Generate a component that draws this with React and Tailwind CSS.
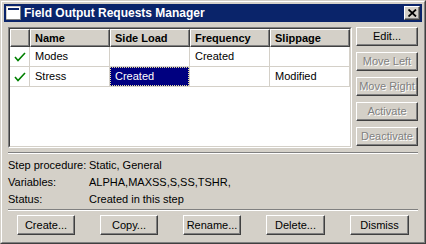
import React from 'react';

const FONT = "font-['Liberation_Sans',Arial,sans-serif]";

const Check = () => (
  <svg width="12" height="10" viewBox="0 0 12 10" className="block">
    <polyline points="1,5 4,8.5 11,1" fill="none" stroke="#008000" strokeWidth="1.6" />
  </svg>
);

const WinButton = ({ children, disabled, className = '' }) => (
  <div
    className={`flex items-center justify-center bg-[#d4d0c8] border border-t-white border-l-white border-r-[#404040] border-b-[#404040] shadow-[inset_-1px_-1px_0_#808080] text-[11px] ${
      disabled ? 'text-[#808080] [text-shadow:1px_1px_0_#fff]' : 'text-black'
    } ${className}`}
  >
    {children}
  </div>
);

const HeaderCell = ({ children, w }) => (
  <div
    className={`${w} h-[18px] flex items-center pl-[4px] font-bold bg-[#d4d0c8] border border-t-white border-l-white border-r-[#404040] border-b-[#404040] shadow-[inset_-1px_-1px_0_#808080]`}
  >
    {children}
  </div>
);

const Cell = ({ children, w, selected }) => (
  <div className={`${w} h-[20px] border-r border-b border-[#d4d0c8] flex items-stretch`}>
    {selected ? (
      <div className="flex-1 flex items-center pl-[4px] bg-[#000080] text-white border border-dotted border-[#e8e0a0]">
        {children}
      </div>
    ) : (
      <div className="flex-1 flex items-center pl-[5px]">{children}</div>
    )}
  </div>
);

const rows = [
  { name: 'Modes', side: '', freq: 'Created', slip: '' },
  { name: 'Stress', side: 'Created', freq: '', slip: 'Modified', selected: true },
];

export default function App() {
  return (
    <div className={`w-[426px] h-[244px] bg-[#d4d0c8] ${FONT} text-[11px] text-black border border-t-[#d4d0c8] border-l-[#d4d0c8] border-r-[#404040] border-b-[#404040]`}>
      <div className="h-full border border-t-white border-l-white border-r-[#808080] border-b-[#808080] p-[2px] flex flex-col">
        {/* Title bar */}
        <div className="h-[18px] bg-[#0a246a] flex items-center pl-[2px] pr-[2px]">
          <svg width="16" height="15" viewBox="0 0 16 15" className="block">
            <rect x="0" y="0" width="15" height="14" fill="#d4d0c8" />
            <rect x="1" y="1" width="13" height="12" fill="#fff" />
            <rect x="2" y="2" width="11" height="2" fill="#0a246a" />
            <rect x="0" y="13" width="15" height="1" fill="#808080" />
            <rect x="14" y="0" width="1" height="14" fill="#808080" />
          </svg>
          <span className="ml-[2px] text-white font-bold text-[12px]">Field Output Requests Manager</span>
          <div className="ml-auto w-[16px] h-[14px] bg-[#d4d0c8] border border-t-white border-l-white border-r-[#404040] border-b-[#404040] shadow-[inset_-1px_-1px_0_#808080] flex items-center justify-center">
            <svg width="9" height="8" viewBox="0 0 9 8" className="block">
              <path d="M0.5 0.5 L8 7.5 M8 0.5 L0.5 7.5" stroke="#000" strokeWidth="1.8" />
            </svg>
          </div>
        </div>

        {/* Body */}
        <div className="flex-1 flex flex-col px-[4px] pt-[5px]">
          <div className="flex gap-[4px]">
            {/* Table */}
            <div className="w-[344px] h-[121px] border border-t-[#808080] border-l-[#808080] border-r-white border-b-white">
              <div className="h-full border border-t-[#404040] border-l-[#404040] border-r-[#d4d0c8] border-b-[#d4d0c8] bg-white">
                <div className="flex">
                  <HeaderCell w="w-[20px]" />
                  <HeaderCell w="w-[80px]">Name</HeaderCell>
                  <HeaderCell w="w-[80px]">Side Load</HeaderCell>
                  <HeaderCell w="w-[80px]">Frequency</HeaderCell>
                  <HeaderCell w="w-[80px]">Slippage</HeaderCell>
                </div>
                {rows.map((r) => (
                  <div key={r.name} className="flex">
                    <div className="w-[20px] h-[20px] border-r border-b border-[#d4d0c8] flex items-center justify-center">
                      <Check />
                    </div>
                    <Cell w="w-[80px]">{r.name}</Cell>
                    <Cell w="w-[80px]" selected={r.selected}>{r.side}</Cell>
                    <Cell w="w-[80px]">{r.freq}</Cell>
                    <Cell w="w-[80px]">{r.slip}</Cell>
                  </div>
                ))}
              </div>
            </div>

            {/* Side buttons */}
            <div className="flex flex-col gap-[6px] w-[62px]">
              <WinButton className="h-[19px]">Edit...</WinButton>
              <WinButton className="h-[19px]" disabled>Move Left</WinButton>
              <WinButton className="h-[19px]" disabled>Move Right</WinButton>
              <WinButton className="h-[19px]" disabled>Activate</WinButton>
              <WinButton className="h-[19px]" disabled>Deactivate</WinButton>
            </div>
          </div>

          <div className="mt-[4px] w-[410px] h-[2px] border-t border-t-[#808080] border-b border-b-white" />

          <div className="grid grid-cols-[81px_1fr] pt-[3px] leading-[17px]">
            <span>Step procedure:</span>
            <span>Static, General</span>
            <span>Variables:</span>
            <span>ALPHA,MAXSS,S,SS,TSHR,</span>
            <span>Status:</span>
            <span>Created in this step</span>
          </div>

          <div className="mt-[1px] w-[410px] h-[2px] border-t border-t-[#808080] border-b border-b-white" />

          <div className="flex gap-[25px] pl-[9px] pt-[4px]">
            <WinButton className="w-[58px] h-[20px]">Create...</WinButton>
            <WinButton className="w-[58px] h-[20px]">Copy...</WinButton>
            <WinButton className="w-[58px] h-[20px]">Rename...</WinButton>
            <WinButton className="w-[59px] h-[20px]">Delete...</WinButton>
            <WinButton className="w-[59px] h-[20px]">Dismiss</WinButton>
          </div>
        </div>
      </div>
    </div>
  );
}
